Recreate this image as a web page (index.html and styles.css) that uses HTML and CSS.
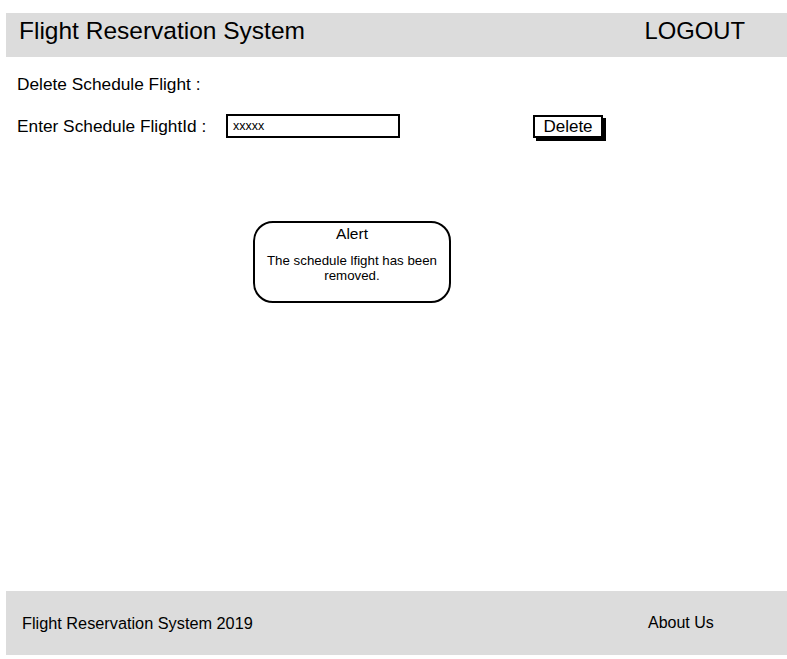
FILE: index.html
```html
<!DOCTYPE html>
<html>
<head>
<meta charset="utf-8">
<link rel="stylesheet" href="styles.css">
</head>
<body>
<div class="page">
  <header class="topbar">
    <div class="brand">Flight Reservation System</div>
    <div class="logout">LOGOUT</div>
  </header>
  <main class="content">
    <div class="title">Delete Schedule Flight :</div>
    <div class="form-row">
      <label class="label">Enter Schedule FlightId :</label>
      <div class="input">xxxxx</div>
      <div class="btn">Delete</div>
    </div>
    <div class="alert">
      <div class="alert-title">Alert</div>
      <div class="alert-text">The schedule lfight has been removed.</div>
    </div>
  </main>
  <footer class="footer">
    <div class="foot-left">Flight Reservation System 2019</div>
    <div class="foot-right">About Us</div>
  </footer>
</div>
</body>
</html>
```
FILE: styles.css
```css
html, body {
  margin: 0;
  padding: 0;
  background: #fff;
}
body {
  font-family: "Liberation Sans", Arial, sans-serif;
  color: #000;
  width: 787px;
  height: 659px;
  overflow: hidden;
}
.page {
  display: flex;
  flex-direction: column;
  height: 659px;
  padding-top: 13px;
  box-sizing: border-box;
}
.topbar {
  margin-left: 6px;
  height: 44px;
  background: #dcdcdc;
  display: flex;
  align-items: center;
  justify-content: space-between;
  padding: 0 42px 8px 13px;
  box-sizing: border-box;
}
.brand {
  font-size: 24.5px;
}
.logout {
  font-size: 23.8px;
}
.content {
  flex: 1;
  padding: 0 0 0 17px;
  display: flex;
  flex-direction: column;
}
.title {
  font-size: 17.3px;
  margin-top: 17px;
  height: 21px;
}
.form-row {
  display: flex;
  align-items: center;
  margin-top: 19px;
  height: 24px;
}
.label {
  font-size: 17.3px;
  width: 209px;
}
.input {
  width: 165px;
  height: 20px;
  border: 2px solid #000;
  font-size: 12.5px;
  line-height: 20px;
  padding-left: 5px;
  box-sizing: content-box;
}
.btn {
  margin-left: 133px;
  width: 66px;
  height: 19px;
  border: 2px solid #000;
  box-shadow: 3px 3px 0 #000;
  font-size: 17px;
  line-height: 19px;
  text-align: center;
}
.alert {
  margin-left: 236px;
  margin-top: 83px;
  width: 198px;
  height: 82px;
  border: 2px solid #000;
  border-radius: 20px;
  text-align: center;
  box-sizing: border-box;
}
.alert-title {
  font-size: 15.5px;
  margin-top: 2px;
  line-height: 18px;
}
.alert-text {
  font-size: 13.3px;
  line-height: 15px;
  margin-top: 10px;
  padding: 0 4px;
}
.footer {
  margin-left: 6px;
  margin-bottom: 4px;
  height: 64px;
  background: #dcdcdc;
  display: flex;
  align-items: center;
  padding: 0 0 0 16px;
}
.foot-left {
  font-size: 16.3px;
  width: 626px;
}
.foot-right {
  font-size: 16px;
}
```
